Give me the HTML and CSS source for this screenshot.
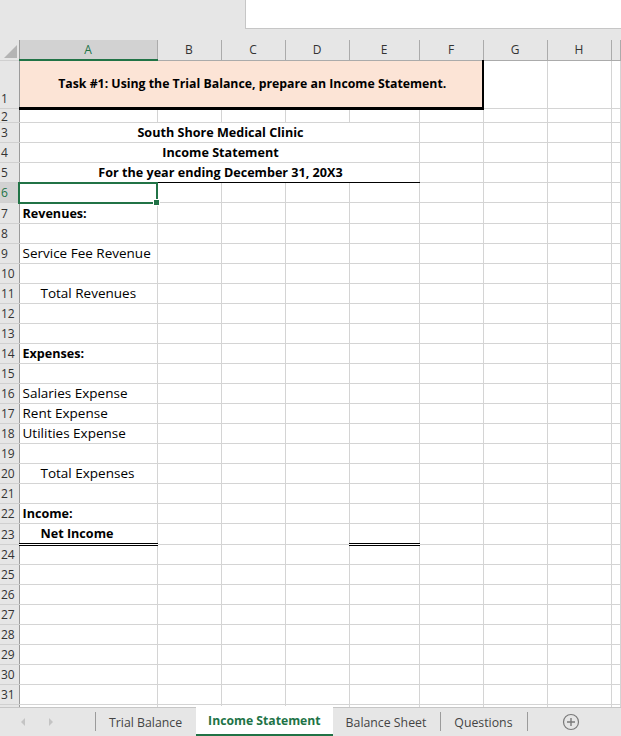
FILE: index.html
```html
<!DOCTYPE html>
<html lang="en">
<head>
    <meta charset="UTF-8">
    <meta name="viewport" content="width=device-width, initial-scale=1.0">
    <title>Income Statement - Workbook</title>
    <link rel="stylesheet" href="styles.css">
</head>
<body>
    <div class="workbook">
        <div class="toolbar">
            <div class="formula-box"></div>
        </div>

        <div class="grid-area">
        <table class="sheet">
            <colgroup>
                <col class="c-hdr"><col class="c-a"><col class="c-n"><col class="c-n"><col class="c-n"><col class="c-e"><col class="c-n"><col class="c-n"><col class="c-n"><col>
            </colgroup>
            <tr class="col-heads">
                <th class="corner"><span class="corner-mark"></span></th>
                <th class="active">A</th><th>B</th><th>C</th><th>D</th><th>E</th><th>F</th><th>G</th><th>H</th><th></th>
            </tr>
            <tr class="r-task">
                <th>1</th>
                <td colspan="6" class="task">Task #1: Using the Trial Balance, prepare an Income Statement.</td>
                <td></td><td></td><td></td>
            </tr>
            <tr class="r-thin"><th>2</th><td></td><td></td><td></td><td></td><td></td><td></td><td></td><td></td><td></td></tr>
            <tr><th>3</th><td colspan="5" class="title">South Shore Medical Clinic</td><td></td><td></td><td></td><td></td></tr>
            <tr><th>4</th><td colspan="5" class="title">Income Statement</td><td></td><td></td><td></td><td></td></tr>
            <tr><th>5</th><td colspan="5" class="title underline">For the year ending December 31, 20X3</td><td></td><td></td><td></td><td></td></tr>
            <tr><th class="active">6</th><td class="selected"><span class="handle"></span></td><td></td><td></td><td></td><td></td><td></td><td></td><td></td><td></td></tr>
            <tr><th>7</th><td class="bold">Revenues:</td><td></td><td></td><td></td><td></td><td></td><td></td><td></td><td></td></tr>
            <tr><th>8</th><td></td><td></td><td></td><td></td><td></td><td></td><td></td><td></td><td></td></tr>
            <tr><th>9</th><td>Service Fee Revenue</td><td></td><td></td><td></td><td></td><td></td><td></td><td></td><td></td></tr>
            <tr><th>10</th><td></td><td></td><td></td><td></td><td></td><td></td><td></td><td></td><td></td></tr>
            <tr><th>11</th><td class="indent">Total Revenues</td><td></td><td></td><td></td><td></td><td></td><td></td><td></td><td></td></tr>
            <tr><th>12</th><td></td><td></td><td></td><td></td><td></td><td></td><td></td><td></td><td></td></tr>
            <tr><th>13</th><td></td><td></td><td></td><td></td><td></td><td></td><td></td><td></td><td></td></tr>
            <tr><th>14</th><td class="bold">Expenses:</td><td></td><td></td><td></td><td></td><td></td><td></td><td></td><td></td></tr>
            <tr><th>15</th><td></td><td></td><td></td><td></td><td></td><td></td><td></td><td></td><td></td></tr>
            <tr><th>16</th><td>Salaries Expense</td><td></td><td></td><td></td><td></td><td></td><td></td><td></td><td></td></tr>
            <tr><th>17</th><td>Rent Expense</td><td></td><td></td><td></td><td></td><td></td><td></td><td></td><td></td></tr>
            <tr><th>18</th><td>Utilities Expense</td><td></td><td></td><td></td><td></td><td></td><td></td><td></td><td></td></tr>
            <tr><th>19</th><td></td><td></td><td></td><td></td><td></td><td></td><td></td><td></td><td></td></tr>
            <tr><th>20</th><td class="indent">Total Expenses</td><td></td><td></td><td></td><td></td><td></td><td></td><td></td><td></td></tr>
            <tr><th>21</th><td></td><td></td><td></td><td></td><td></td><td></td><td></td><td></td><td></td></tr>
            <tr><th>22</th><td class="bold">Income:</td><td></td><td></td><td></td><td></td><td></td><td></td><td></td><td></td></tr>
            <tr><th>23</th><td class="bold indent total">Net Income</td><td></td><td></td><td></td><td class="total"></td><td></td><td></td><td></td><td></td></tr>
            <tr><th>24</th><td></td><td></td><td></td><td></td><td></td><td></td><td></td><td></td><td></td></tr>
            <tr><th>25</th><td></td><td></td><td></td><td></td><td></td><td></td><td></td><td></td><td></td></tr>
            <tr><th>26</th><td></td><td></td><td></td><td></td><td></td><td></td><td></td><td></td><td></td></tr>
            <tr><th>27</th><td></td><td></td><td></td><td></td><td></td><td></td><td></td><td></td><td></td></tr>
            <tr><th>28</th><td></td><td></td><td></td><td></td><td></td><td></td><td></td><td></td><td></td></tr>
            <tr><th>29</th><td></td><td></td><td></td><td></td><td></td><td></td><td></td><td></td><td></td></tr>
            <tr><th>30</th><td></td><td></td><td></td><td></td><td></td><td></td><td></td><td></td><td></td></tr>
            <tr><th>31</th><td></td><td></td><td></td><td></td><td></td><td></td><td></td><td></td><td></td></tr>
            <tr><th></th><td></td><td></td><td></td><td></td><td></td><td></td><td></td><td></td><td></td></tr>
        </table>
        </div>

        <div class="tabs">
            <div class="tab-nav">
                <svg width="8" height="10" viewBox="0 0 8 10"><path d="M6 1 L2 5 L6 9 Z" fill="#c4c4c4"/></svg>
                <svg width="8" height="10" viewBox="0 0 8 10"><path d="M2 1 L6 5 L2 9 Z" fill="#c4c4c4"/></svg>
            </div>
            <span class="tab-sep"></span>
            <div class="tab">Trial Balance</div>
            <div class="tab current">Income Statement</div>
            <div class="tab">Balance Sheet</div>
            <span class="tab-sep"></span>
            <div class="tab">Questions</div>
            <span class="tab-sep"></span>
            <div class="tab-add">
                <svg width="18" height="18" viewBox="0 0 18 18">
                    <circle cx="9" cy="9" r="7.5" fill="none" stroke="#7a7a7a" stroke-width="1.2"/>
                    <path d="M9 5 V13 M5 9 H13" stroke="#7a7a7a" stroke-width="1.4"/>
                </svg>
            </div>
        </div>
    </div>
</body>
</html>
```

FILE: styles.css
```css
body {
    margin: 0;
    font-family: "Open Sans", "Liberation Sans", sans-serif;
    background: #fff;
}
.workbook {
    width: 621px;
    height: 736px;
    overflow: hidden;
    display: flex;
    flex-direction: column;
}
.toolbar {
    height: 40px;
    background-color: #e6e6e6;
    display: flex;
    justify-content: flex-end;
    flex-shrink: 0;
}
.formula-box {
    width: 376px;
    height: 29px;
    background-color: #fff;
    border-left: 1px solid #c6c6c6;
    border-bottom: 1px solid #c6c6c6;
    box-sizing: border-box;
}

/* grid */
.grid-area {
    flex: 1;
    overflow: hidden;
}
.sheet {
    width: 621px;
    table-layout: fixed;
    border-collapse: collapse;
    font-size: 13.5px;
    color: #000;
}
.c-hdr { width: 19px; }
.c-a { width: 138px; }
.c-n { width: 64px; }
.c-e { width: 70px; }
.sheet tr {
    height: 20px;
}
.sheet td {
    padding: 0 0 0 3px;
    border: 1px solid #d4d4d4;
    white-space: nowrap;
    overflow: visible;
    line-height: 19px;
    vertical-align: bottom;
}
.sheet th {
    background-color: #e6e6e6;
    font-weight: normal;
    font-size: 12px;
    color: #333;
    padding: 0;
}
.col-heads th {
    border-right: 1px solid #ababab;
    border-bottom: 1px solid #ababab;
    text-align: center;
    line-height: 19px;
}
.col-heads th.active {
    background-color: #d2d2d2;
    border-bottom: 2px solid #217346;
    color: #1e5e3a;
}
.sheet tr > th:first-child {
    text-align: left;
    padding-left: 1px;
    border-right: 1px solid #9b9b9b;
    border-bottom: 1px solid #d0d0d0;
    vertical-align: bottom;
    line-height: 19px;
}
.sheet tr > th.active {
    background-color: #d2d2d2;
    color: #217346;
}
.sheet th.corner {
    position: relative;
    border-bottom: 1px solid #ababab;
}
.corner-mark {
    position: absolute;
    right: 2px;
    bottom: 2px;
    width: 0;
    height: 0;
    border-left: 13px solid transparent;
    border-bottom: 13px solid #b4b4b4;
}

.sheet tr.r-task { height: 48px; }
.sheet tr.r-thin { height: 14px; }
.sheet tr.r-thin > td,
.sheet tr.r-thin > th:first-child {
    line-height: 11px;
}

.task {
    background-color: #fce4d6;
    text-align: center;
    vertical-align: middle !important;
    font-weight: bold;
    font-size: 12.3px;
    border-right: 2px solid #000 !important;
    border-bottom: 3px solid #000 !important;
}
.title {
    text-align: center;
    font-weight: bold;
    font-size: 12.6px;
}
.underline {
    border-bottom: 1px solid #000 !important;
}
.bold {
    font-weight: bold;
    font-size: 12.6px;
}
.indent { padding-left: 21px !important; }
.total {
    border-bottom: 3px double #000 !important;
}
.selected {
    position: relative;
    border: 2px solid #217346 !important;
}
.handle {
    position: absolute;
    right: -4px;
    bottom: -4px;
    width: 5px;
    height: 5px;
    background-color: #217346;
    border: 1px solid #fff;
}

/* sheet tabs */
.tabs {
    height: 28px;
    flex-shrink: 0;
    background-color: #e6e6e6;
    border-top: 1px solid #c6c6c6;
    display: flex;
    align-items: stretch;
    font-size: 12.5px;
    color: #444;
}
.tab-nav {
    width: 95px;
    display: flex;
    align-items: center;
    gap: 20px;
    padding-left: 19px;
    box-sizing: border-box;
}
.tab-sep {
    width: 1px;
    background-color: #9b9b9b;
    margin: 4px 0 5px;
}
.tab {
    display: flex;
    align-items: center;
    padding: 0 14px 0 13px;
    font-size: 12.3px;
}
.tab.current {
    background-color: #fff;
    color: #217346;
    font-weight: bold;
    font-size: 12.2px;
    padding: 0 12px;
    border-bottom: 2px solid #217346;
    margin-top: -2px;
}
.tab-add {
    display: flex;
    align-items: center;
    padding-left: 34px;
}
```
